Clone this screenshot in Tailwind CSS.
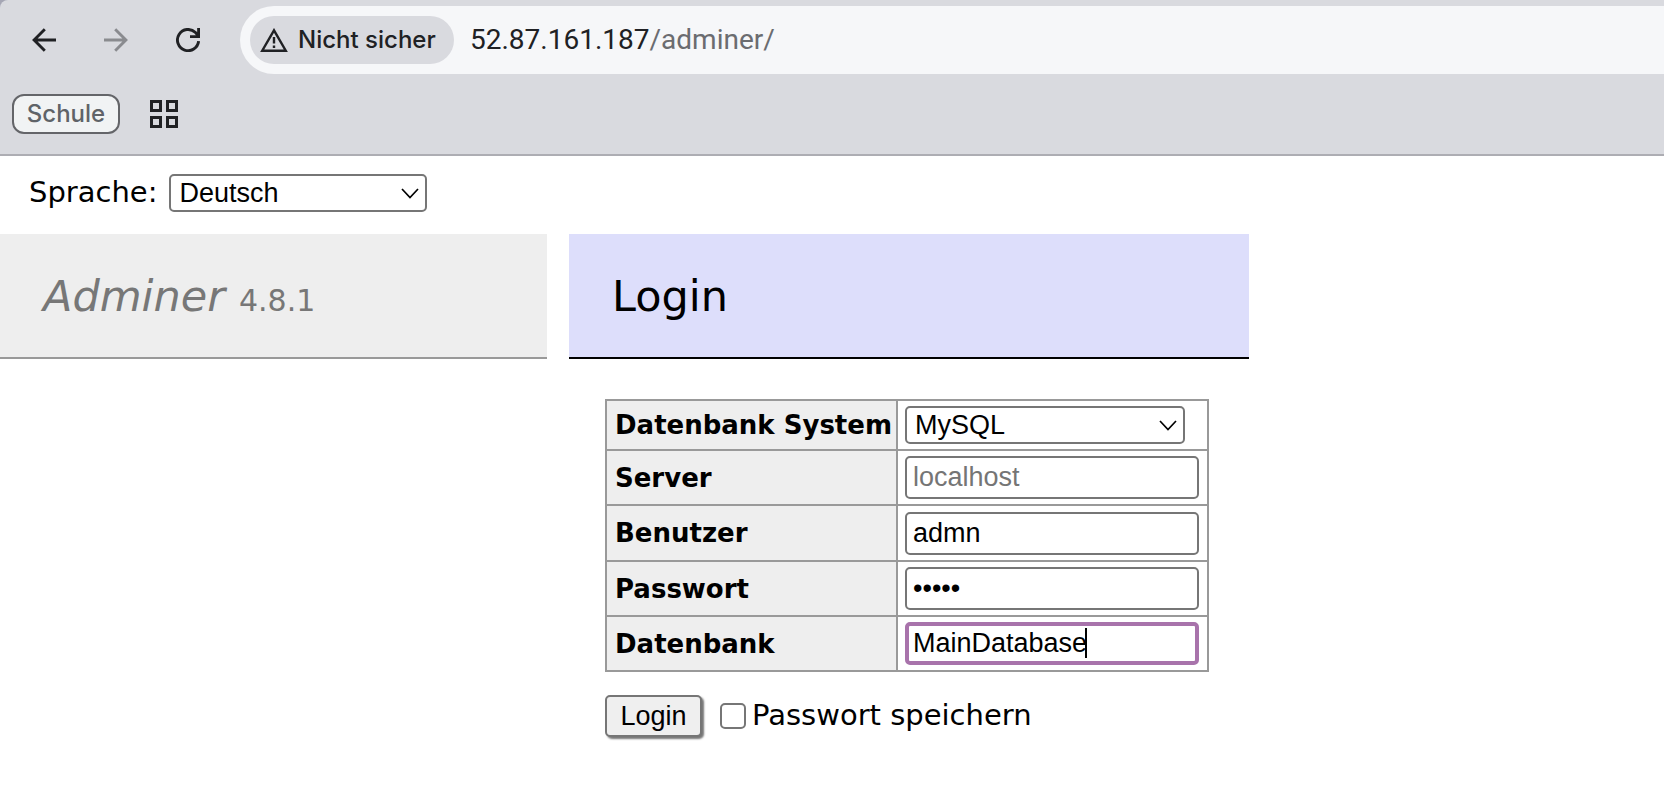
<!DOCTYPE html>
<html lang="de">
<head>
<meta charset="utf-8">
<title>Login - Adminer</title>
<script src="https://cdn.jsdelivr.net/npm/@tailwindcss/browser@4"></script>
</head>
<body class="min-h-screen bg-white font-['DejaVu_Sans',sans-serif] text-black">
<header class="border-b-2 border-[#adadb3] bg-[#a5a6b4] font-[Inter,sans-serif]">
  <div class="rounded-tl-lg bg-[#d9dadf] pt-1.5">
    <div class="flex h-17 items-center">
      <nav class="flex items-center gap-12 pl-8 pr-10">
        <button type="button" aria-label="Zurück" class="size-6"><svg viewBox="0 0 24 24" class="size-6" fill="none" stroke="#202124" stroke-width="2.9"><path d="M24 12H2.500M12.800 1.300L2.100 12L12.800 22.700"/></svg></button>
        <button type="button" aria-label="Vorwärts" class="size-6"><svg viewBox="0 0 24 24" class="size-6" fill="none" stroke="#8a8b8f" stroke-width="2.9"><path d="M0 12h21.500M11.200 1.300L21.900 12L11.200 22.700"/></svg></button>
        <button type="button" aria-label="Neu laden" class="size-6"><svg viewBox="0 0 24 24" class="size-6" fill="none" stroke="#202124" stroke-width="2.9"><path d="M22.600 13.200A10.600 10.600 0 1 1 19.500 4.500l3 3.500M22.600 0v8.600h-8.600"/></svg></button>
      </nav>
      <div class="flex h-17 flex-1 items-center gap-4 rounded-l-full bg-[#f6f7f9] pl-2.5">
        <button type="button" class="flex h-12 w-51 items-center gap-2.5 rounded-full bg-[#d9dadf] pl-2.5 text-2xl font-medium whitespace-nowrap text-[#202124]">
          <svg viewBox="0 0 28 24" class="h-6 w-7" fill="none" stroke="#202124" stroke-width="2.4"><path d="M14 2.300L2.200 22.700h23.600z"/><path d="M14 9v6.500M14 17.500V20"/></svg>
          Nicht sicher
        </button>
        <div class="font-[Roboto,sans-serif] text-[28px] leading-8 whitespace-nowrap text-[#202124]">52.87.161.187<span class="text-[#6b6c70]">/adminer/</span></div>
      </div>
    </div>
    <div class="flex h-20 items-center gap-[30px] pl-3">
      <button type="button" class="h-10 w-27 rounded-xl border-2 border-[#646569] bg-[#f1f3f4] text-2xl leading-8 font-medium text-[#5f6368]">Schule</button>
      <button type="button" aria-label="Tabgruppen" class="size-7"><svg viewBox="0 0 28 28" class="size-7" fill="none" stroke="#202124" stroke-width="3"><path d="M1.500 1.500h9v9h-9zM17.500 1.500h9v9h-9zM1.500 17.500h9v9h-9zM17.500 17.500h9v9h-9z"/></svg></button>
    </div>
  </div>
</header>

<div class="flex h-[78px] items-center gap-3 pl-[29px]">
  <label for="lang" class="mb-1.5 text-[29px] leading-9">Sprache:</label>
  <div class="relative mb-1">
    <select id="lang" class="h-[38px] w-[258px] appearance-none rounded-[5px] border-2 border-[#767676] bg-white pl-2 font-['Liberation_Sans',sans-serif] text-[27px] leading-8"><option>Deutsch</option></select>
    <svg viewBox="0 0 18 11" class="pointer-events-none absolute top-3.5 right-2 h-[11px] w-[18px]" fill="none" stroke="#000" stroke-width="1.700"><path d="M1 1l8 8.500L17 1"/></svg>
  </div>
</div>

<div class="flex items-start gap-[22px]">
  <aside class="w-[547px] border-b-2 border-[#999] bg-[#eee] text-[#777]">
    <h1 class="flex h-[123px] items-baseline gap-3.5 pt-9 pl-[43px] text-[43px] leading-[52px]"><a href="#" class="italic">Adminer</a><span class="text-[30px]">4.8.1</span></h1>
  </aside>
  <main class="w-[680px]">
    <h2 class="h-[125px] border-b-2 border-black bg-[#dddefb] pt-9 pl-[43px] text-[43px] leading-[52px]">Login</h2>
    <form class="pt-10 pl-9">
      <table class="border-collapse text-[27px] leading-8">
        <tr class="h-[50px]">
          <th class="w-[291px] border-2 border-[#999] bg-[#eee] pl-2 text-left text-[26px] whitespace-nowrap"><label for="driver">Datenbank System</label></th>
          <td class="w-[311px] border-2 border-[#999] px-[7px]">
            <div class="relative w-[280px]">
              <select id="driver" class="block h-[38px] w-full appearance-none rounded-[5px] border-2 border-[#767676] bg-white pl-2 font-['Liberation_Sans',sans-serif] text-[27px] leading-8"><option>MySQL</option></select>
              <svg viewBox="0 0 18 11" class="pointer-events-none absolute top-3.5 right-2 h-[11px] w-[18px]" fill="none" stroke="#000" stroke-width="1.700"><path d="M1 1l8 8.500L17 1"/></svg>
            </div>
          </td>
        </tr>
        <tr class="h-[55px]">
          <th class="border-2 border-[#999] bg-[#eee] pl-2 text-left text-[26px]"><label for="server">Server</label></th>
          <td class="border-2 border-[#999] px-[7px]"><input id="server" placeholder="localhost" class="block h-[43px] w-[294px] rounded-[5px] border-2 border-[#767676] px-1.5 font-['Liberation_Sans',sans-serif] placeholder:text-[#757575]"></td>
        </tr>
        <tr class="h-14">
          <th class="border-2 border-[#999] bg-[#eee] pl-2 text-left text-[26px]"><label for="user">Benutzer</label></th>
          <td class="border-2 border-[#999] px-[7px]"><input id="user" value="admn" class="block h-[43px] w-[294px] rounded-[5px] border-2 border-[#767676] px-1.5 font-['Liberation_Sans',sans-serif]"></td>
        </tr>
        <tr class="h-[55px]">
          <th class="border-2 border-[#999] bg-[#eee] pl-2 text-left text-[26px]"><label for="pass">Passwort</label></th>
          <td class="border-2 border-[#999] px-[7px]"><input id="pass" type="password" value="admin" class="block h-[43px] w-[294px] rounded-[5px] border-2 border-[#767676] px-1.5 font-['Liberation_Sans',sans-serif]"></td>
        </tr>
        <tr class="h-[55px]">
          <th class="border-2 border-[#999] bg-[#eee] pl-2 text-left text-[26px]"><label for="db">Datenbank</label></th>
          <td class="border-2 border-[#999] px-[7px]">
            <div class="relative"><input id="db" value="MainDatabase" class="block h-[43px] w-[294px] rounded-[5px] border-4 border-[#a873ab] px-1 font-['Liberation_Sans',sans-serif]"><span class="absolute top-1.5 left-[180px] h-[30px] w-0.5 bg-black"></span></div>
          </td>
        </tr>
      </table>
      <div class="flex items-center gap-[18px] pt-[23px]">
        <button type="button" class="h-[42px] w-[97px] rounded-[5px] border-2 border-[#767676] bg-[#efefef] font-['Liberation_Sans',sans-serif] text-[27px] leading-8 shadow-[2px_2px_2px_#777]">Login</button>
        <div class="flex items-center gap-1.5">
          <input id="permanent" type="checkbox" class="size-[26px] appearance-none rounded-[5px] border-2 border-[#767676] bg-white checked:bg-[#a873ab]">
          <label for="permanent" class="mb-0.5 text-[29px] leading-9">Passwort speichern</label>
        </div>
      </div>
    </form>
  </main>
</div>
</body>
</html>
